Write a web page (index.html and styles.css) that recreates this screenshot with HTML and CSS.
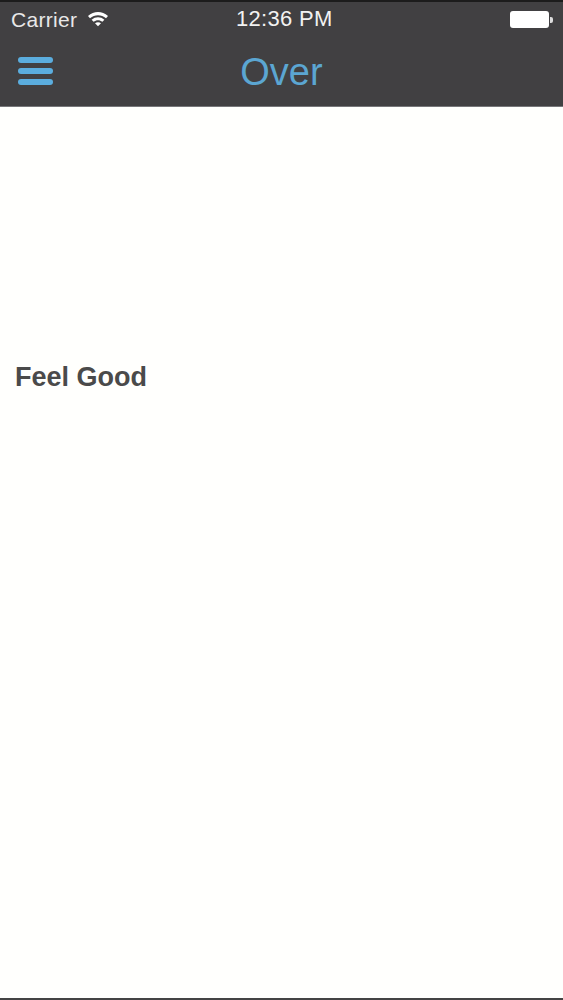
FILE: index.html
```html
<!DOCTYPE html>
<html lang="en">
<head>
<meta charset="utf-8">
<title>Over</title>
<link rel="stylesheet" href="styles.css">
</head>
<body>
<div class="screen">
  <header class="header">
    <div class="status">
      <div class="status-left">
        <span class="carrier">Carrier</span>
        <svg class="wifi" viewBox="0 0 22 16" width="22" height="17" aria-hidden="true">
          <path d="M1 5.5C6.8.3 15.200.3 21 5.500L19 7.700C14.300 3.600 7.700 3.600 3 7.700Z" fill="#fff"/>
          <path d="M4.600 9.200C8.300 5.900 13.700 5.900 17.400 9.200L15.400 11.300C12.800 9.100 9.200 9.100 6.600 11.300Z" fill="#fff"/>
          <path d="M8 12.700C9.800 11.300 12.200 11.300 14 12.700L11 15.800Z" fill="#fff"/>
        </svg>
      </div>
      <span class="time">12:36 PM</span>
      <div class="battery"><div class="battery-body"></div><div class="battery-tip"></div></div>
    </div>
    <nav class="navbar">
      <div class="menu" aria-label="Menu"><span class="bar"></span><span class="bar"></span><span class="bar"></span></div>
      <h1 class="title">Over</h1>
    </nav>
  </header>
  <main class="content">
    <p class="headline">Feel Good</p>
  </main>
  <div class="bottom-edge"></div>
</div>
</body>
</html>
```
FILE: styles.css
```css
* { box-sizing: border-box; }
html, body { margin: 0; padding: 0; }
body { width: 563px; height: 1000px; overflow: hidden; background: #fffffd; font-family: "Liberation Sans", Arial, sans-serif; }
.screen { display: flex; flex-direction: column; height: 1000px; }
.header { height: 107px; background: #414042; border-top: 2px solid #1c1c1c; border-bottom: 1px solid #77777a; flex: none; }
.status { position: relative; display: flex; align-items: center; justify-content: space-between; height: 36px; padding: 0 10px 0 11px; }
.status-left { display: flex; align-items: center; gap: 10px; }
.carrier { color: #e8e8e8; font-size: 21px; letter-spacing: .3px; }
.wifi { margin-top: -4px; }
.time { position: absolute; left: 236px; top: 5px; color: #f2f2f2; font-size: 22px; line-height: 24px; letter-spacing: .3px; }
.battery { display: flex; align-items: center; margin-top: -1px; }
.battery-body { width: 39px; height: 17px; background: #fff; border-radius: 3px; }
.battery-tip { width: 3px; height: 6px; margin-left: 1px; background: #ddd; border-radius: 0 2px 2px 0; }
.navbar { position: relative; height: 68px; display: flex; align-items: center; justify-content: center; }
.menu { position: absolute; left: 18px; top: 19px; width: 35px; display: flex; flex-direction: column; gap: 5px; }
.bar { height: 6px; background: #5badde; border-radius: 3px; }
.title { margin: 0; font-size: 38px; font-weight: 400; color: #5ba6d2; line-height: 44px; }
.content { flex: 1; padding: 253px 15px 0; }
.headline { margin: 0; font-size: 27px; font-weight: 700; line-height: 34px; color: #4a4a4a; }
.bottom-edge { height: 2px; background: #444; flex: none; }
```
